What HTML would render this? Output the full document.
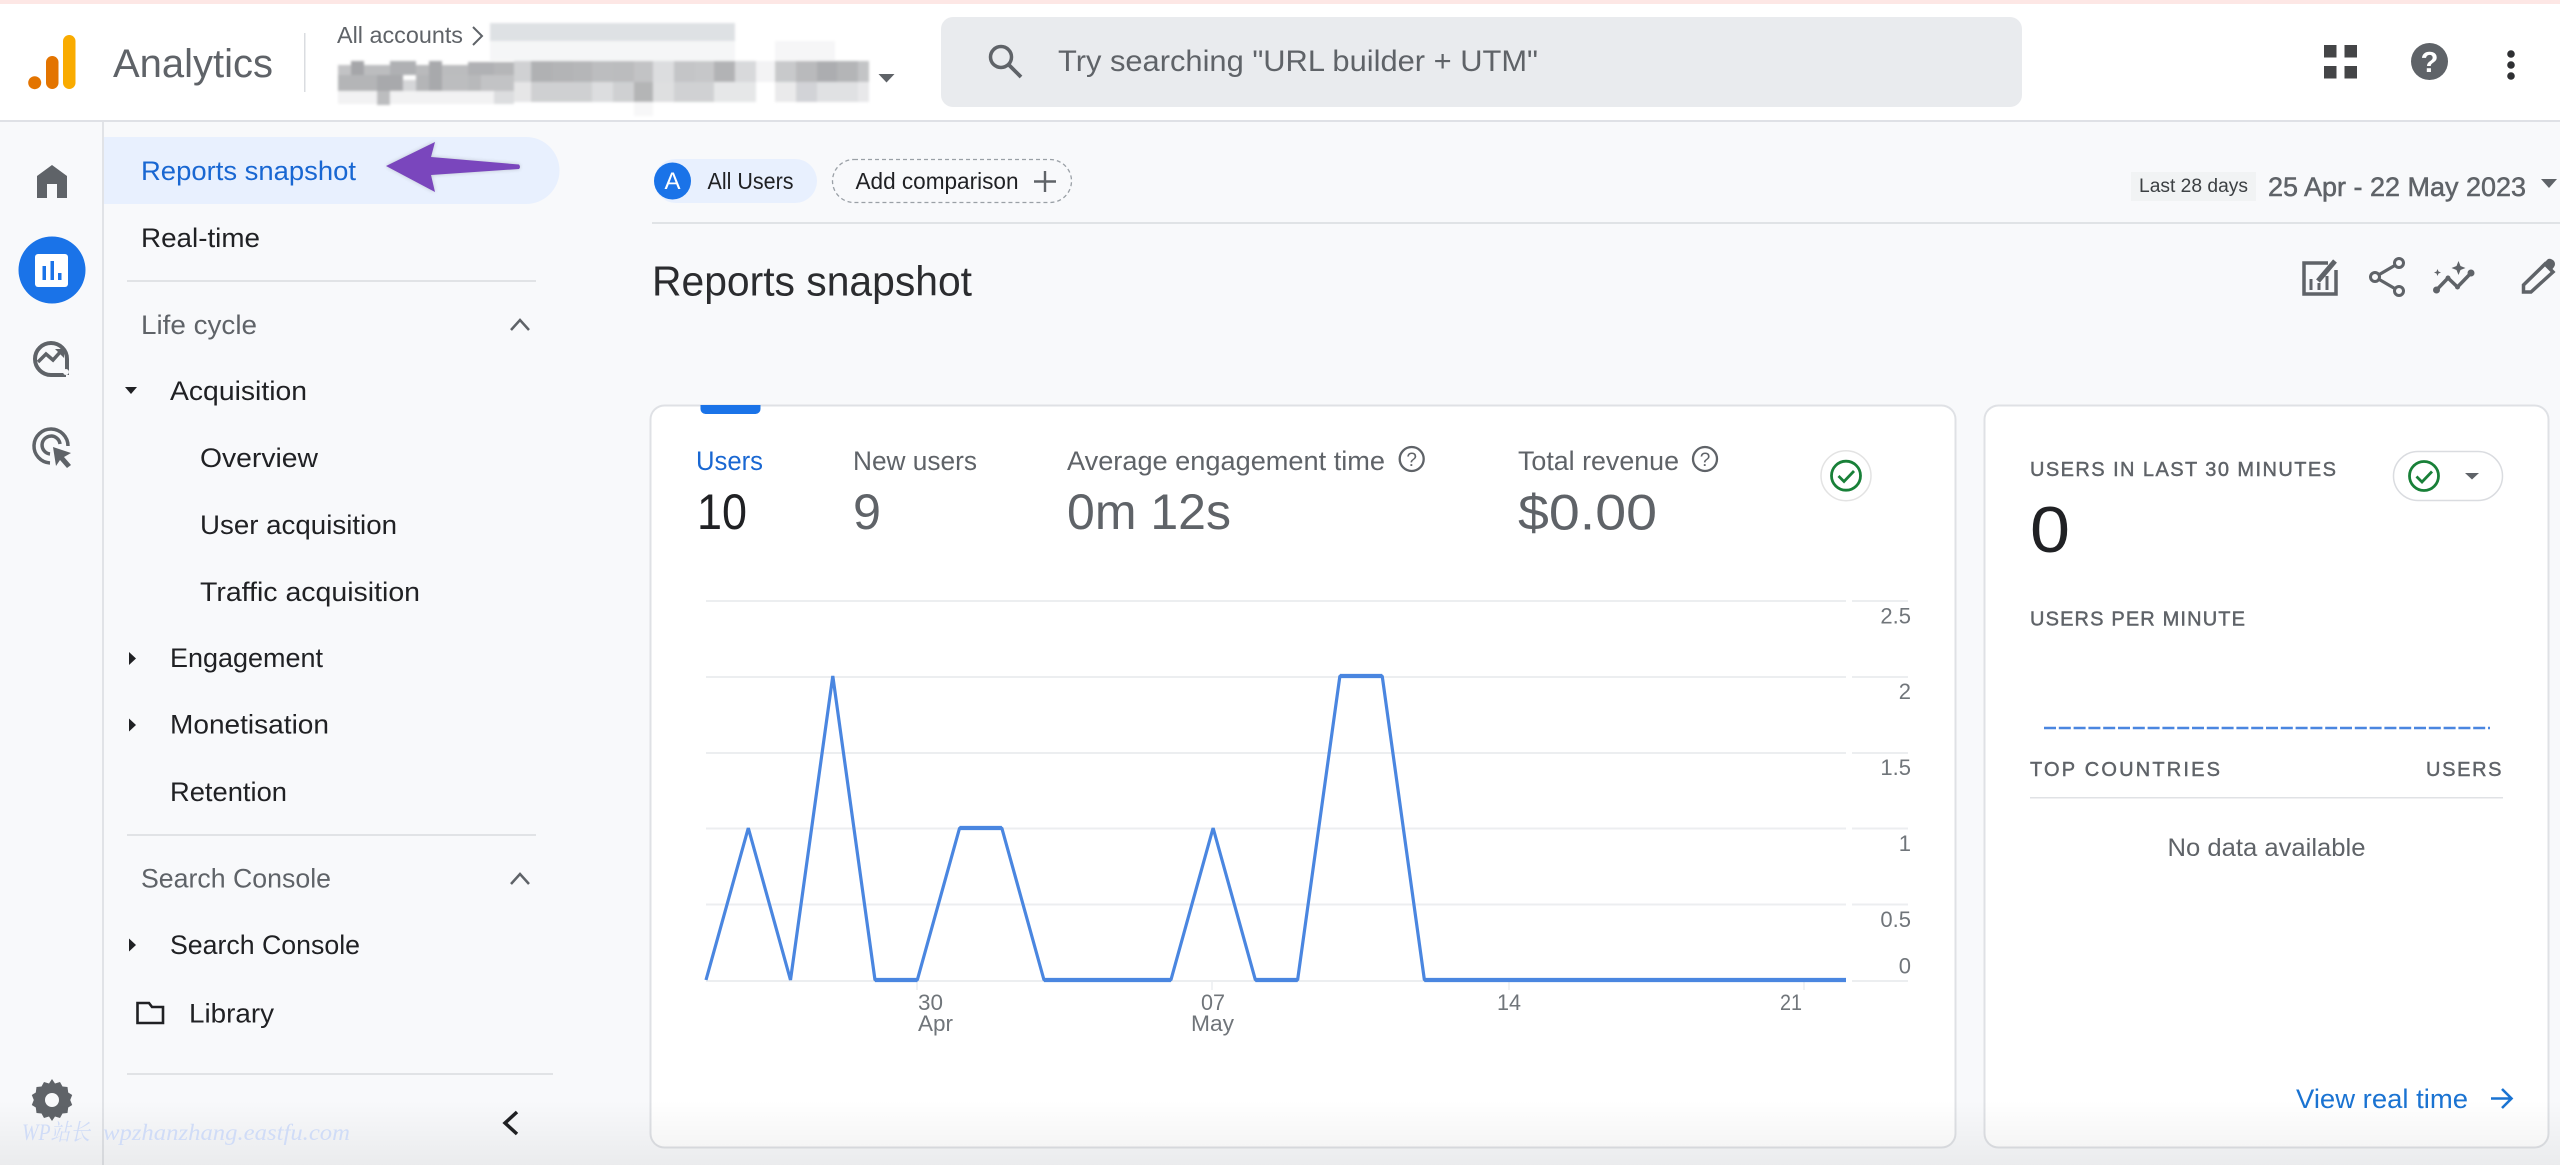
<!DOCTYPE html>
<html lang="en"><head><meta charset="utf-8"><title>Analytics</title>
<style>
html,body{margin:0;padding:0;background:#f8f9fb;width:2560px;height:1165px;overflow:hidden}
svg{display:block;position:absolute;left:0;top:0}
text{font-family:"Liberation Sans","Noto Sans CJK SC",sans-serif;white-space:pre}
.n{font-size:27px;fill:#202124}
.g{font-size:27px;fill:#5f6368}
.m{font-size:27px;fill:#5f6368}
.b{font-size:50px;fill:#5f6368}
.c{font-size:20px;fill:#5f6368;stroke:#5f6368;stroke-width:.45px}
.a{font-size:22px;fill:#70757a}
</style></head><body>
<svg width="2560" height="1165" viewBox="0 0 2560 1165" xmlns="http://www.w3.org/2000/svg">
<defs>
<linearGradient id="sh" x1="0" y1="0" x2="0" y2="1"><stop offset="0" stop-color="#000" stop-opacity="0"/><stop offset="1" stop-color="#000" stop-opacity=".055"/></linearGradient>
<filter id="bl"><feGaussianBlur stdDeviation="1.3"/></filter>
<filter id="as"><feGaussianBlur stdDeviation="2"/></filter>
</defs>
<rect width="2560" height="1165" fill="#f8f9fb"/>
<!-- header -->
<rect width="2560" height="120" fill="#fff"/>
<rect width="2560" height="4" fill="#fde7e5"/>
<rect y="120" width="2560" height="2" fill="#dfe1e6"/>
<rect x="63" y="35" width="12.5" height="54" rx="6.2" fill="#f9ab00"/>
<rect x="46" y="56" width="12.5" height="33" rx="6.2" fill="#e37400"/>
<circle cx="34.7" cy="82.7" r="6.5" fill="#e37400"/>
<text x="113" y="77" font-size="40" fill="#5f6368" textLength="160" lengthAdjust="spacingAndGlyphs">Analytics</text>
<rect x="304" y="33" width="1.5" height="59" fill="#dadce0"/>
<text x="337" y="43" font-size="23" fill="#5f6368" textLength="126" lengthAdjust="spacingAndGlyphs">All accounts</text>
<path d="M473 27l9 9-9 9" fill="none" stroke="#5f6368" stroke-width="2"/>
<!-- blurred account text -->
<g filter="url(#bl)">
<rect x="490" y="23" width="245" height="18" fill="#dee1e4"/>
<rect x="490" y="41" width="245" height="20" fill="#f5f6f7"/>
<rect x="775" y="41" width="60" height="20" fill="#f6f6f7"/>
<rect x="338" y="65" width="13" height="10" fill="#c2c3c5"/><rect x="351" y="61" width="13" height="14" fill="#a5a6a9"/><rect x="364" y="65" width="26" height="10" fill="#bcbdbf"/><rect x="390" y="61" width="26" height="14" fill="#afb0b3"/><rect x="416" y="65" width="13" height="10" fill="#b9babc"/><rect x="429" y="61" width="13" height="14" fill="#a8a9ac"/><rect x="442" y="65" width="26" height="10" fill="#bbbcbe"/><rect x="468" y="62" width="26" height="13" fill="#b0b1b4"/><rect x="494" y="62" width="20" height="13" fill="#b5b6b8"/>
<rect x="338" y="75" width="52" height="16" fill="#b4b5b7"/><rect x="377" y="75" width="26" height="16" fill="#a8a9ac"/><rect x="403" y="80" width="13" height="11" fill="#d5d6d8"/><rect x="416" y="75" width="13" height="16" fill="#b4b5b7"/><rect x="429" y="75" width="13" height="16" fill="#a8a9ac"/><rect x="442" y="75" width="26" height="16" fill="#bcbdbf"/><rect x="468" y="75" width="13" height="16" fill="#b8b9bb"/><rect x="481" y="75" width="33" height="16" fill="#c2c3c5"/>
<rect x="338" y="91" width="176" height="13" fill="#f2f2f3"/><rect x="377" y="91" width="13" height="14" fill="#bcbdbf"/><rect x="494" y="91" width="20" height="13" fill="#dcdddf"/>
<rect x="514" y="61" width="17" height="21" fill="#d0d1d3"/><rect x="531" y="61" width="21" height="21" fill="#b0b1b3"/><rect x="552" y="61" width="21" height="21" fill="#b3b4b6"/><rect x="573" y="61" width="19" height="21" fill="#b5b6b8"/><rect x="592" y="61" width="21" height="21" fill="#bcbdbf"/><rect x="613" y="61" width="21" height="21" fill="#bbbcbe"/><rect x="634" y="61" width="19" height="21" fill="#c2c3c5"/><rect x="653" y="61" width="21" height="21" fill="#dcdddf"/><rect x="674" y="61" width="21" height="21" fill="#c4c5c7"/><rect x="695" y="61" width="19" height="21" fill="#c6c7c9"/><rect x="714" y="61" width="21" height="21" fill="#b2b3b5"/><rect x="735" y="61" width="21" height="21" fill="#d8d9db"/><rect x="756" y="61" width="19" height="21" fill="#f3f3f4"/><rect x="775" y="61" width="21" height="21" fill="#c8c9cb"/><rect x="796" y="61" width="21" height="21" fill="#b9babc"/><rect x="817" y="61" width="20" height="21" fill="#acadb0"/><rect x="837" y="61" width="21" height="21" fill="#b4b5b7"/><rect x="858" y="61" width="11" height="21" fill="#c3c4c6"/>
<rect x="514" y="82" width="17" height="20" fill="#e6e6e7"/><rect x="531" y="82" width="61" height="20" fill="#cfd0d2"/><rect x="592" y="82" width="21" height="20" fill="#dcdddf"/><rect x="613" y="82" width="21" height="20" fill="#cfd0d2"/><rect x="634" y="82" width="19" height="20" fill="#b4b5b6"/><rect x="653" y="82" width="21" height="20" fill="#dedfe0"/><rect x="674" y="82" width="40" height="20" fill="#d0d1d3"/><rect x="714" y="82" width="42" height="20" fill="#e6e7e8"/><rect x="775" y="82" width="21" height="20" fill="#eaeaeb"/><rect x="796" y="82" width="21" height="20" fill="#d2d3d7"/><rect x="817" y="82" width="41" height="20" fill="#e0e1e3"/><rect x="858" y="82" width="11" height="20" fill="#e8e8ea"/>
<rect x="634" y="102" width="19" height="14" fill="#f7f7f8"/>
</g>
<path d="M878.5 74h16l-8 8.500z" fill="#5f6368"/>
<!-- search -->
<rect x="941" y="17" width="1081" height="90" rx="12" fill="#e9ebee"/>
<circle cx="1001" cy="57" r="10.500" fill="none" stroke="#5f6368" stroke-width="3.500"/>
<path d="M1008.500 64.500L1021 77" stroke="#5f6368" stroke-width="3.800" fill="none"/>
<text x="1058" y="71" font-size="30" fill="#5f6368" textLength="480" lengthAdjust="spacingAndGlyphs">Try searching "URL builder + UTM"</text>
<!-- top right -->
<g fill="#444547"><rect x="2324" y="45" width="12.500" height="12.500"/><rect x="2344.500" y="45" width="12.500" height="12.500"/><rect x="2324" y="66" width="12.500" height="12.500"/><rect x="2344.500" y="66" width="12.500" height="12.500"/></g>
<circle cx="2429.500" cy="61.500" r="18.500" fill="#5f6368"/>
<text x="2429.500" y="72" font-size="29" font-weight="bold" fill="#fff" text-anchor="middle">?</text>
<g fill="#2f3033"><circle cx="2511" cy="54" r="3.800"/><circle cx="2511" cy="65" r="3.800"/><circle cx="2511" cy="76" r="3.800"/></g>
<!-- rail -->
<rect x="102" y="122" width="2" height="1043" fill="#e1e3e7"/>
<path d="M37 198V176L52 165L67 176V198H57V184H47V198Z" fill="#5f6368"/>
<circle cx="52" cy="270" r="33.500" fill="#1a73e8"/>
<rect x="35" y="254" width="33" height="33" rx="3" fill="#fff"/>
<g fill="#1a73e8"><rect x="42.500" y="266" width="3.500" height="14"/><rect x="50.500" y="261" width="3.500" height="19"/><rect x="58" y="273" width="3.500" height="7"/></g>
<path d="M66 375H51A16 16 0 1 1 67 359V375" fill="none" stroke="#5f6368" stroke-width="4"/>
<circle cx="66" cy="372" r="3" fill="#f8f9fb"/>
<path d="M38 362L46 354L53 360L62 350" fill="none" stroke="#5f6368" stroke-width="3.500"/><path d="M55 349H64V358Z" fill="#5f6368"/>
<path d="M50 463A17 17 0 1 1 68 446" fill="none" stroke="#5f6368" stroke-width="3.500"/>
<path d="M50 454A9 9 0 1 1 60 444" fill="none" stroke="#5f6368" stroke-width="3.500"/>
<path d="M53 447L71 453L64 457L71 465L67 468L60 460L56 466Z" fill="#5f6368"/>
<path d="M52 1079l3 4.500 5-1.500 2.500 4.500 5 .5.700 5.500 4 2.500-2 5 2 5-4 2.500-.700 5.500-5 .5-2.500 4.500-5-1.500-3 4.500-3-4.500-5 1.500-2.500-4.500-5-.5-.700-5.500-4-2.500 2-5-2-5 4-2.500.700-5.500 5-.5 2.500-4.500 5 1.500z" fill="#5f6368"/>
<circle cx="52" cy="1100" r="7" fill="#f8f9fb"/>
<!-- sidebar -->
<path d="M104 137H526A33.500 33.500 0 0 1 526 204H104Z" fill="#e8f0fe"/>
<text x="141" y="180" font-size="27" fill="#1967d2" textLength="215" lengthAdjust="spacingAndGlyphs">Reports snapshot</text>
<path d="M386 166L435 142L431 157L519 164.500Q521 167 519 169L431 175L435 192Z" fill="#000" opacity=".18" filter="url(#as)"/>
<path d="M386 166L435 142L431 157L519 164.500Q521 167 519 169L431 175L435 192Z" fill="#7a46bd"/>
<text x="141" y="247" class="n" textLength="119" lengthAdjust="spacingAndGlyphs">Real-time</text>
<rect x="127" y="280" width="409" height="2" fill="#e1e3e6"/>
<text x="141" y="334" class="g" textLength="116" lengthAdjust="spacingAndGlyphs">Life cycle</text>
<path d="M511 330L520 320L529 330" fill="none" stroke="#5f6368" stroke-width="2.500"/>
<path d="M125 387h12l-6 7z" fill="#202124"/>
<text x="170" y="400" class="n" textLength="137" lengthAdjust="spacingAndGlyphs">Acquisition</text>
<text x="200" y="467" class="n" textLength="118" lengthAdjust="spacingAndGlyphs">Overview</text>
<text x="200" y="534" class="n" textLength="197" lengthAdjust="spacingAndGlyphs">User acquisition</text>
<text x="200" y="601" class="n" textLength="220" lengthAdjust="spacingAndGlyphs">Traffic acquisition</text>
<path d="M129 652l7 6.500-7 6.500z" fill="#202124"/>
<text x="170" y="667" class="n" textLength="153" lengthAdjust="spacingAndGlyphs">Engagement</text>
<path d="M129 718.500l7 6.500-7 6.500z" fill="#202124"/>
<text x="170" y="733.500" class="n" textLength="159" lengthAdjust="spacingAndGlyphs">Monetisation</text>
<text x="170" y="801" class="n" textLength="117" lengthAdjust="spacingAndGlyphs">Retention</text>
<rect x="127" y="834" width="409" height="2" fill="#e1e3e6"/>
<text x="141" y="887.500" class="g" textLength="190" lengthAdjust="spacingAndGlyphs">Search Console</text>
<path d="M511 884L520 874L529 884" fill="none" stroke="#5f6368" stroke-width="2.500"/>
<path d="M129 938.500l7 6.500-7 6.500z" fill="#202124"/>
<text x="170" y="954" class="n" textLength="190" lengthAdjust="spacingAndGlyphs">Search Console</text>
<path d="M137.500 1023V1003H149L152 1007H163V1023Z" fill="none" stroke="#202124" stroke-width="2.600"/>
<text x="189" y="1022.500" class="n" textLength="85" lengthAdjust="spacingAndGlyphs">Library</text>
<rect x="127" y="1073" width="426" height="2" fill="#e1e3e6"/>
<path d="M517 1112L505 1123L517 1134" fill="none" stroke="#202124" stroke-width="3.500"/>
<!-- filter bar -->
<rect x="654" y="159" width="163" height="44" rx="22" fill="#e8f0fe"/>
<circle cx="672.500" cy="181" r="18.500" fill="#1a73e8"/>
<text x="672.500" y="189" font-size="24" fill="#fff" text-anchor="middle">A</text>
<text x="707.500" y="189" font-size="23" fill="#202124" textLength="86" lengthAdjust="spacingAndGlyphs">All Users</text>
<rect x="832.500" y="159.500" width="239" height="43" rx="21.500" fill="none" stroke="#9aa0a6" stroke-width="1.300" stroke-dasharray="4 3"/>
<text x="855.500" y="189" font-size="23" fill="#202124" textLength="163" lengthAdjust="spacingAndGlyphs">Add comparison</text>
<path d="M1045 171V192M1034 181.500H1056" stroke="#5f6368" stroke-width="2.400" fill="none"/>
<rect x="652" y="222" width="1908" height="2" fill="#e0e3e6"/>
<rect x="2131" y="172" width="125" height="29" fill="#f1f3f4"/>
<text x="2139" y="192" font-size="19" fill="#3c4043" textLength="109" lengthAdjust="spacingAndGlyphs">Last 28 days</text>
<text x="2268" y="196" font-size="27" fill="#5f6368" stroke="#5f6368" stroke-width=".5" textLength="258" lengthAdjust="spacingAndGlyphs">25 Apr - 22 May 2023</text>
<path d="M2541 179h16l-8 9z" fill="#5f6368"/>
<text x="652" y="295.500" font-size="42" fill="#2b2c2f" textLength="320" lengthAdjust="spacingAndGlyphs">Reports snapshot</text>
<!-- action icons -->
<g fill="none" stroke="#5f6368">
<path d="M2328 263H2304V294H2336V270" stroke-width="3.500"/>
<path d="M2318 281L2335 261" stroke-width="5"/>
<path d="M2311 290V279M2319 290V283M2327 290V276" stroke-width="3"/>
<path d="M2399 263L2375 277L2399 291" stroke-width="3.200"/>
<circle cx="2399" cy="263" r="4.500" stroke-width="3" fill="#f8f9fb"/><circle cx="2375" cy="277" r="4.500" stroke-width="3" fill="#f8f9fb"/><circle cx="2399" cy="291" r="4.500" stroke-width="3" fill="#f8f9fb"/>
<path d="M2436.500 290L2448 278L2457.500 287L2471 273" stroke-width="3.500"/>
<path d="M2523.500 292V285L2545 264L2553 272L2531 292Z" stroke-width="3.500"/>
</g>
<path d="M2544 263L2548 259Q2551 258 2554 261Q2556 264 2554 267L2551 271Z" fill="#5f6368"/>
<circle cx="2436.500" cy="290" r="3.500" fill="#5f6368"/><circle cx="2471" cy="273" r="3.500" fill="#5f6368"/><circle cx="2448" cy="278" r="2.500" fill="#5f6368"/><circle cx="2457.500" cy="287" r="2.500" fill="#5f6368"/>
<path d="M2458.500 261l2 5 5 2-5 2-2 5-2-5-5-2 5-2zM2437.500 269l1 2.500 2.500 1-2.500 1-1 2.500-1-2.500-2.500-1 2.500-1z" fill="#5f6368"/>
<!-- left card -->
<rect x="650.500" y="405.500" width="1305" height="742" rx="14" fill="#fff" stroke="#dfe1e5" stroke-width="2"/>
<path d="M700.500 405h60v4a5 5 0 0 1-5 5h-50a5 5 0 0 1-5-5z" fill="#1a73e8"/>
<text x="696" y="470" font-size="27" fill="#1967d2" textLength="67" lengthAdjust="spacingAndGlyphs">Users</text>
<text x="853" y="470" class="m" textLength="124" lengthAdjust="spacingAndGlyphs">New users</text>
<text x="1067" y="470" class="m" textLength="318" lengthAdjust="spacingAndGlyphs">Average engagement time</text>
<circle cx="1411.700" cy="459" r="12" fill="none" stroke="#5f6368" stroke-width="2.300"/>
<text x="1411.700" y="466" font-size="19" fill="#5f6368" text-anchor="middle">?</text>
<text x="1518" y="470" class="m" textLength="161" lengthAdjust="spacingAndGlyphs">Total revenue</text>
<circle cx="1705" cy="459" r="12" fill="none" stroke="#5f6368" stroke-width="2.300"/>
<text x="1705" y="466" font-size="19" fill="#5f6368" text-anchor="middle">?</text>
<text x="697" y="529" font-size="50" fill="#202124" textLength="50" lengthAdjust="spacingAndGlyphs">10</text>
<text x="853" y="529" class="b" textLength="28" lengthAdjust="spacingAndGlyphs">9</text>
<text x="1067" y="529" class="b" textLength="164" lengthAdjust="spacingAndGlyphs">0m 12s</text>
<text x="1518" y="529.500" class="b" textLength="139" lengthAdjust="spacingAndGlyphs">$0.00</text>
<circle cx="1846" cy="475.700" r="25" fill="#fff" stroke="#e3e3e3" stroke-width="1.500"/>
<circle cx="1846" cy="475.700" r="14.500" fill="none" stroke="#188038" stroke-width="2.800"/>
<path d="M1838.500 476L1844 481.500L1854 471" fill="none" stroke="#188038" stroke-width="2.800"/>
<!-- chart -->
<g stroke="#eceef0" stroke-width="2">
<path d="M706 601H1846M1852 601H1908M706 677H1846M1852 677H1908M706 753H1846M1852 753H1908M706 828.500H1846M1852 828.500H1908M706 904.500H1846M1852 904.500H1908M706 981H1846M1852 981H1908"/>
<path d="M917 981V990M1212 981V990M1509 981V990M1804 981V990" stroke-width="1.500"/>
</g>
<polyline fill="none" stroke="#4a86e0" stroke-width="3.200" stroke-linejoin="bevel" points="706,980 748.300,828 790.500,980 832.800,676 875,980 917.300,980 959.600,828 1001.800,828 1044,980 1086.300,980 1128.600,980 1170.900,980 1213.100,828 1255.400,980 1297.600,980 1339.900,676 1382.200,676 1424.400,980 1466.700,980 1846,980"/>
<path d="M875 980H917.300M959.600 828H1001.800M1044 980H1170.900M1255.400 980H1297.600M1339.900 676H1382.200M1424.400 980H1846" fill="none" stroke="#4a86e0" stroke-width="4.200"/>
<g class="a">
<text x="1911" y="623.500" class="a" text-anchor="end">2.5</text>
<text x="1911" y="699" class="a" text-anchor="end">2</text>
<text x="1911" y="775" class="a" text-anchor="end">1.5</text>
<text x="1911" y="851" class="a" text-anchor="end">1</text>
<text x="1911" y="927" class="a" text-anchor="end">0.5</text>
<text x="1911" y="973.500" class="a" text-anchor="end">0</text>
<text x="918" y="1010" class="a" textLength="25" lengthAdjust="spacingAndGlyphs">30</text>
<text x="918" y="1031" class="a" textLength="35" lengthAdjust="spacingAndGlyphs">Apr</text>
<text x="1201" y="1010" class="a" textLength="24" lengthAdjust="spacingAndGlyphs">07</text>
<text x="1191" y="1031" class="a" textLength="43" lengthAdjust="spacingAndGlyphs">May</text>
<text x="1497" y="1010" class="a" textLength="24" lengthAdjust="spacingAndGlyphs">14</text>
<text x="1780" y="1010" class="a" textLength="22" lengthAdjust="spacingAndGlyphs">21</text>
</g>
<!-- right card -->
<rect x="1984.500" y="405.500" width="564" height="742" rx="14" fill="#fff" stroke="#dfe1e5" stroke-width="2"/>
<text x="2030" y="476" class="c" textLength="306" lengthAdjust="spacing">USERS IN LAST 30 MINUTES</text>
<rect x="2393.500" y="451.500" width="109" height="49" rx="24.500" fill="#fff" stroke="#dadce0" stroke-width="1.500"/>
<circle cx="2424" cy="476" r="14.500" fill="none" stroke="#188038" stroke-width="2.800"/>
<path d="M2416.500 476.500L2422 482L2432 471.500" fill="none" stroke="#188038" stroke-width="2.800"/>
<path d="M2465 473h14l-7 6.500z" fill="#5f6368"/>
<text x="2030" y="552" font-size="65" fill="#202124" textLength="40" lengthAdjust="spacingAndGlyphs">0</text>
<text x="2030" y="625.500" class="c" textLength="215" lengthAdjust="spacing">USERS PER MINUTE</text>
<path d="M2044 728H2490" stroke="#4a86e0" stroke-width="2.500" stroke-dasharray="12 2.800" fill="none"/>
<text x="2030" y="776" class="c" textLength="190" lengthAdjust="spacing">TOP COUNTRIES</text>
<text x="2426" y="776" class="c" textLength="75.500" lengthAdjust="spacing">USERS</text>
<rect x="2030" y="797" width="473" height="1.500" fill="#e0e2e5"/>
<text x="2167.500" y="856" font-size="25" fill="#5f6368" textLength="198" lengthAdjust="spacingAndGlyphs">No data available</text>
<text x="2296" y="1108" font-size="27" fill="#1a73d2" textLength="172" lengthAdjust="spacingAndGlyphs">View real time</text>
<path d="M2491 1098.500H2511M2502 1089L2511.500 1098.500L2502 1108" fill="none" stroke="#1a73d2" stroke-width="2.600"/>
<!-- watermark & bottom shadow -->
<rect y="1100" width="2560" height="65" fill="url(#sh)"/>
<text x="22" y="1140" font-size="23" fill="#d0dcf7" font-style="italic" style="font-family:'Liberation Serif','Noto Serif CJK SC',serif" textLength="68" lengthAdjust="spacingAndGlyphs">WP站长</text>
<text x="103" y="1140" font-size="23" fill="#d0dcf7" font-style="italic" style="font-family:'Liberation Serif',serif" textLength="247" lengthAdjust="spacingAndGlyphs">wpzhanzhang.eastfu.com</text>
</svg>
</body></html>
